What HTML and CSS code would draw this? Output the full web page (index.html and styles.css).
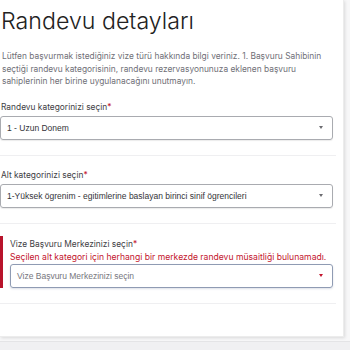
FILE: index.html
```html
<!DOCTYPE html>
<html lang="tr">
<head>
<meta charset="utf-8">
<link rel="stylesheet" href="styles.css">
</head>
<body>
<div class="page">
  <div class="card">
    <h1 class="title">Randevu detayları</h1>
    <p class="intro">Lütfen başvurmak istediğiniz vize türü hakkında bilgi veriniz. 1. Başvuru Sahibinin seçtiği randevu kategorisinin, randevu rezervasyonunuza eklenen başvuru sahiplerinin her birine uygulanacağını unutmayın.</p>

    <div class="field">
      <div class="label">Randevu kategorinizi seçin<span class="req">*</span></div>
      <div class="select">
        <span class="value">1 - Uzun Donem</span>
        <span class="caret"></span>
      </div>
    </div>
    <div class="divider"></div>

    <div class="field">
      <div class="label">Alt kategorinizi seçin<span class="req">*</span></div>
      <div class="select">
        <span class="value">1-Yüksek ögrenim - egitimlerine baslayan birinci sinif ögrencileri</span>
        <span class="caret"></span>
      </div>
    </div>
    <div class="divider"></div>

    <div class="field error">
      <div class="label">Vize Başvuru Merkezinizi seçin<span class="req">*</span></div>
      <div class="err-msg">Seçilen alt kategori için herhangi bir merkezde randevu müsaitliği bulunamadı.</div>
      <div class="select focus">
        <span class="value placeholder">Vize Başvuru Merkezinizi seçin</span>
        <span class="caret red"></span>
      </div>
    </div>
    <div class="divider"></div>
    <div class="card-bottom"></div>
  </div>
  <div class="below"></div>
</div>
</body>
</html>
```

FILE: styles.css
```css
html, body {
  margin: 0;
  padding: 0;
}
body {
  background: #f7f7f8;
  font-family: "Inter", "Noto Sans", sans-serif;
  width: 350px;
  height: 350px;
  overflow: hidden;
}
.page {
  display: flex;
  flex-direction: column;
}
.card {
  width: 343px;
  background: #fff;
  box-shadow: 1px 1px 3px rgba(0,0,0,0.12);
  border-right: 1px solid #ececec;
  border-bottom: 1px solid #ececec;
}
.title {
  margin: 0;
  padding: 3px 0 0 1px;
  font-size: 23.2px;
  line-height: 36px;
  font-weight: 300;
  color: #222;
  letter-spacing: 0;
}
.intro {
  margin: 11px 0 0 0;
  padding-left: 2px;
  font-size: 8.4px;
  line-height: 12.5px;
  color: #6f6f77;
  width: 330px;
}
.field {
  padding: 13px 0 0 0;
}
.label {
  font-size: 8.4px;
  line-height: 12px;
  color: #3e3e44;
  padding-left: 1px;
}
.req {
  color: #c3142d;
}
.select {
  margin-top: 3px;
  width: 333px;
  height: 24px;
  box-sizing: border-box;
  border: 1px solid #a9abb0;
  border-radius: 3px;
  display: flex;
  align-items: center;
  justify-content: space-between;
  padding: 0 9px 0 6px;
  box-shadow: 0 1px 1px rgba(0,0,0,0.08);
}
.value {
  font-family: "Liberation Sans", Arial, sans-serif;
  font-size: 8.5px;
  color: #333338;
  white-space: nowrap;
}
.placeholder {
  color: #76767d;
}
.caret {
  width: 0;
  height: 0;
  border-left: 2.5px solid transparent;
  border-right: 2.5px solid transparent;
  border-top: 3px solid #6b6b70;
}
.caret.red {
  border-top-color: #c3142d;
}
.divider {
  margin-top: 15px;
  width: 336px;
  height: 1px;
  background: #efeff1;
}
.field.error {
  margin-top: 12px;
  padding: 2px 0 0 10px;
  border-left: 3px solid #b8132b;
}
.field.error .label {
  padding-left: 0;
  margin-left: -3px;
}
.field.error .select {
  width: 323px;
  margin-left: -3px;
  margin-top: 1px;
  border-color: #8f9bb3;
  box-shadow: 0 1px 2px rgba(60,80,120,0.18);
}
.err-msg {
  margin-left: -3px;
  margin-top: 1px;
  font-size: 8.6px;
  line-height: 12px;
  color: #c3142d;
  white-space: nowrap;
}
.card-bottom {
  height: 32px;
}
.below {
  margin-top: 4px;
  height: 20px;
  background: #f0f0f2;
  border-top: 1px solid #e4e4e6;
}
```
